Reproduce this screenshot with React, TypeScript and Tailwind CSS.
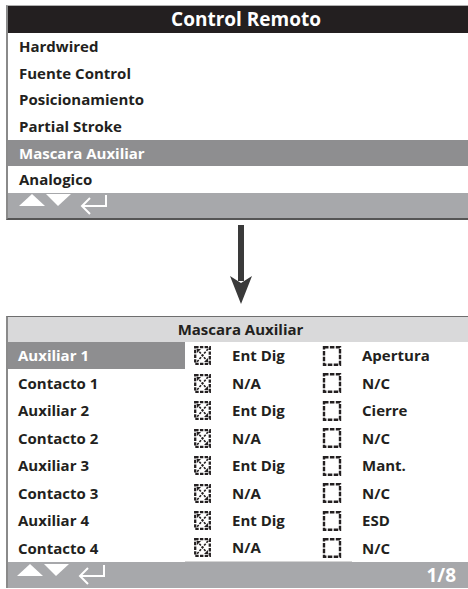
import React from 'react'

const font = { fontFamily: '"Open Sans", "Noto Sans", sans-serif' }

function NavIcons() {
  return (
    <svg width="92" height="24" viewBox="0 0 92 24" className="block">
      <polygon points="1,13 14,1 27,13" fill="#fff" />
      <polygon points="28,1 53,1 40,13" fill="#fff" />
      <path d="M88 2 V13 H64" fill="none" stroke="#fff" strokeWidth="2" />
      <path d="M72 5 L64 13 L72 21" fill="none" stroke="#fff" strokeWidth="2" />
    </svg>
  )
}

function CheckedBox() {
  return (
    <svg width="17" height="19" viewBox="0 0 17 19" className="block">
      <rect x="1.2" y="1.2" width="14.6" height="16.6" fill="none" stroke="#231f20" strokeWidth="2.3" strokeDasharray="3.4 1.3" />
      <line x1="3" y1="3" x2="14" y2="16" stroke="#231f20" strokeWidth="1.6" strokeDasharray="2.4 1.2" />
      <line x1="14" y1="3" x2="3" y2="16" stroke="#231f20" strokeWidth="1.6" strokeDasharray="2.4 1.2" />
      <polygon points="3,3 7,3 3,7" fill="#231f20" />
      <polygon points="14,16 10,16 14,12" fill="#231f20" />
    </svg>
  )
}

function EmptyBox() {
  return (
    <svg width="20" height="20" viewBox="0 0 20 20" className="block">
      <rect x="2" y="1.2" width="16" height="17.6" fill="none" stroke="#231f20" strokeWidth="2.4" strokeDasharray="4.5 1.4" />
    </svg>
  )
}

const menu = ['Hardwired', 'Fuente Control', 'Posicionamiento', 'Partial Stroke', 'Mascara Auxiliar', 'Analogico']

const rows = [
  ['Auxiliar 1', 'Ent Dig', 'Apertura'],
  ['Contacto 1', 'N/A', 'N/C'],
  ['Auxiliar 2', 'Ent Dig', 'Cierre'],
  ['Contacto 2', 'N/A', 'N/C'],
  ['Auxiliar 3', 'Ent Dig', 'Mant.'],
  ['Contacto 3', 'N/A', 'N/C'],
  ['Auxiliar 4', 'Ent Dig', 'ESD'],
  ['Contacto 4', 'N/A', 'N/C'],
]

export default function App() {
  return (
    <div className="w-[468px] h-[589px] overflow-hidden bg-white text-[#231f20]" style={font}>
      <div className="pt-[5px]">
        {/* top menu screen */}
        <div className="ml-[6px] w-[478px] border-t border-t-[#b0b0b0] border-l-2 border-l-[#8a8a8a] border-b-2 border-b-[#555555]">
          <div className="h-[27px] bg-[#231f20] text-white flex items-center justify-center text-[19px] font-bold">
            Control Remoto
          </div>
          {menu.map((m) => (
            <div
              key={m}
              className={
                m === 'Mascara Auxiliar'
                  ? 'h-[26.67px] flex items-center pl-[11px] text-[15px] font-bold bg-[#8e8e90] text-white'
                  : 'h-[26.67px] flex items-center pl-[11px] text-[15px] font-bold'
              }
            >
              {m}
            </div>
          ))}
          <div className="h-[25px] bg-[#a7a8ab] flex items-center pl-[10px]">
            <NavIcons />
          </div>
        </div>

        {/* arrow */}
        <div className="h-[96px] flex justify-center pt-[5px]">
          <svg width="22" height="80" viewBox="0 0 22 80" className="block ml-[14px]">
            <rect x="8" y="0" width="6" height="56" fill="#3a3a3a" />
            <polygon points="0,51 11,79 22,51 11,58" fill="#3a3a3a" />
          </svg>
        </div>

        {/* bottom detail screen */}
        <div className="ml-[6px] w-[467px] border-t border-t-[#6e6e6e] border-l-2 border-l-[#8a8a8a]">
          <div className="h-[25px] bg-[#d9d9da] flex items-center justify-center text-[15px] font-bold">
            Mascara Auxiliar
          </div>
          {rows.map((r, i) => (
            <div key={i} className="h-[27.5px] flex items-center text-[15px] font-bold">
              <div
                className={
                  i === 0
                    ? 'w-[177px] h-full flex items-center pl-[10px] bg-[#8e8e90] text-white'
                    : 'w-[177px] h-full flex items-center pl-[10px]'
                }
              >
                {r[0]}
              </div>
              <div
                className={
                  i === rows.length - 1
                    ? 'flex h-full items-center border-b border-[#d4d4d4]'
                    : 'flex h-full items-center'
                }
              >
                <div className="w-[40px] pl-[9px]">
                  <CheckedBox />
                </div>
                <div className="w-[90px] pl-[7px]">{r[1]}</div>
                <div className="w-[37px] pl-[7px]">
                  <EmptyBox />
                </div>
              </div>
              <div className="pl-[10px]">{r[2]}</div>
            </div>
          ))}
          <div className="h-[26px] bg-[#a7a8ab] flex items-center justify-between pl-[8px] pr-[17px]">
            <NavIcons />
            <span className="text-white text-[19px] font-bold">1/8</span>
          </div>
        </div>
      </div>
    </div>
  )
}
